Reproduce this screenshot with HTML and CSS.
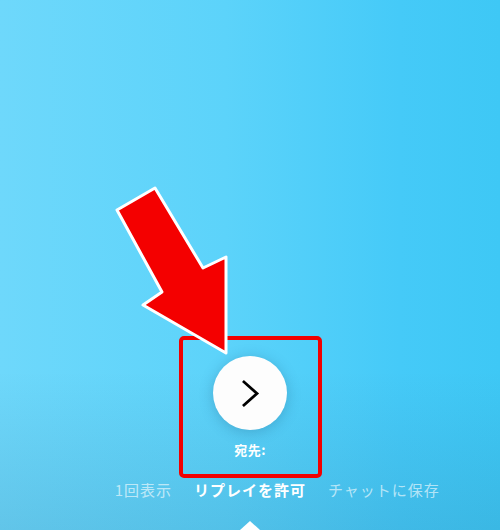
FILE: index.html
```html
<!DOCTYPE html>
<html lang="ja">
<head>
<meta charset="utf-8">
<link rel="stylesheet" href="styles.css">
</head>
<body>
<div class="stage">
  <div class="send">
    <svg class="chev" width="74" height="74" viewBox="0 0 74 74">
      <path d="M31 26 L44 37.5 L31 49" fill="none" stroke="#000" stroke-width="2.8" stroke-linecap="square"/>
    </svg>
  </div>
  <div class="label">宛先:</div>
  <div class="tabs">
    <span class="tab left">1回表示</span>
    <span class="tab active">リプレイを許可</span>
    <span class="tab right">チャットに保存</span>
  </div>
  <div class="caret"></div>

  <svg class="annot" width="500" height="530" viewBox="0 0 500 530">
    <rect x="181" y="338" width="139" height="138" rx="3" fill="none" stroke="#f20000" stroke-width="4"/>
    <polygon points="155,188 203,268 226,257 226,353 143,305 162,292 117,210" fill="#f40000" stroke="#fff" stroke-width="3" stroke-linejoin="round"/>
  </svg>
</div>
</body>
</html>
```
FILE: styles.css
```css
html, body {
  margin: 0;
  padding: 0;
}
.stage {
  position: relative;
  width: 500px;
  height: 530px;
  overflow: hidden;
  display: flex;
  flex-direction: column;
  align-items: center;
  padding-top: 356px;
  box-sizing: border-box;
  font-family: "Noto Sans CJK JP", "Noto Sans", sans-serif;
  background:
    linear-gradient(to bottom, rgba(40,110,150,0) 0%, rgba(40,110,150,0) 70%, rgba(40,110,150,0.18) 100%),
    linear-gradient(to right, #6ed8fb 0%, #5cd3fa 45%, #45caf8 80%, #3ec8f5 100%);
}
.send {
  width: 74px;
  height: 74px;
  border-radius: 50%;
  background: #fdfdfd;
  box-shadow: 0 2px 14px rgba(20, 80, 120, 0.28);
  flex: none;
}
.chev {
  display: block;
}
.label {
  margin-top: 11px;
  font-size: 13px;
  line-height: 18px;
  font-weight: 700;
  color: #fff;
  letter-spacing: 0.5px;
}
.tabs {
  margin-top: 21px;
  width: 100%;
  display: grid;
  grid-template-columns: 1fr auto 1fr;
  column-gap: 22px;
  font-size: 15px;
  line-height: 20px;
  letter-spacing: 1px;
}
.tab {
  color: rgba(255, 255, 255, 0.62);
  white-space: nowrap;
}
.tab.left {
  justify-self: end;
}
.tab.right {
  justify-self: start;
}
.tab.active {
  color: #fff;
  font-weight: 700;
}
.caret {
  margin-top: auto;
  width: 0;
  height: 0;
  border-left: 10px solid transparent;
  border-right: 10px solid transparent;
  border-bottom: 9px solid #fff;
}
.annot {
  position: absolute;
  left: 0;
  top: 0;
  pointer-events: none;
}
```
